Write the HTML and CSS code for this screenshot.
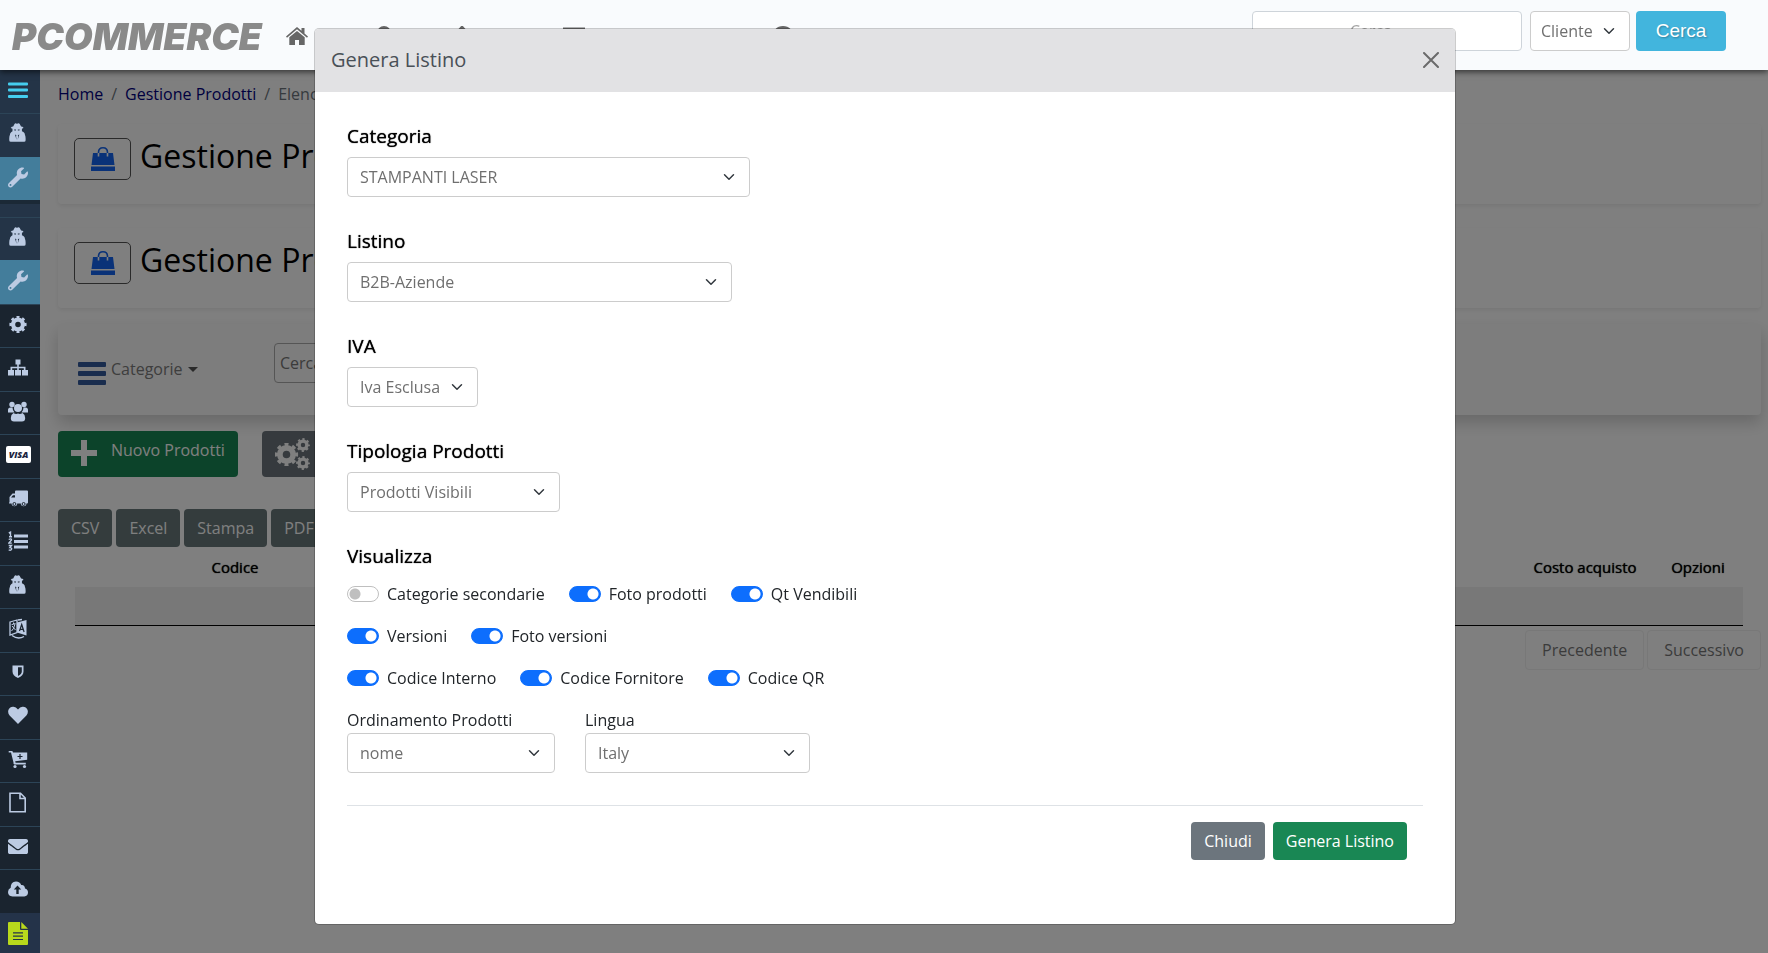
FILE: index.html
```
<!DOCTYPE html>
<html lang="it">
<head>
<meta charset="UTF-8">
<meta name="viewport" content="width=device-width, initial-scale=1.0">
<title>PCOMMERCE - Gestione Prodotti</title>
<link rel="stylesheet" href="styles.css">
</head>
<body>

<!-- Icone -->
<svg class="sprite" aria-hidden="true">
<symbol id="i-bars" viewBox="0 0 20 20"><path d="M1 2h18a1 1 0 0 1 1 1v1a1 1 0 0 1-1 1H1a1 1 0 0 1-1-1V3a1 1 0 0 1 1-1zM1 8h18a1 1 0 0 1 1 1v1a1 1 0 0 1-1 1H1a1 1 0 0 1-1-1V9a1 1 0 0 1 1-1zM1 14.500h18a1 1 0 0 1 1 1v1a1 1 0 0 1-1 1H1a1 1 0 0 1-1-1v-1a1 1 0 0 1 1-1z"/></symbol>
<symbol id="i-spy" viewBox="0 0 20 24"><path d="M4.500 4L6 1Q7-.1 8 .6q.9.400 1.600 0Q11-.2 12 1l1.500 3q2 .3 2.500 1 .7.600-.3 1l-1.200.5v2.800q2 .7 2.500 1.900 1 1.300.8 2 .9 1.700.9 4.300v2.200q0 1.800-1.800 1.800H1.800Q0 21.500 0 19.700v-2.200q0-2.600.9-4.300-.2-.7.8-2 .5-1.200 2-1.900V6.500L2.300 6q-1-.4-.2-1 .5-.7 2.400-1z"/><path class="cut" d="M5.500 7.500h2.200v1H5.900zM9.800 7.500H12l-.4 1H9.800zM6.500 13l1.700 1-.4 1.500.6 4zM11.500 13l-1.700 1 .4 1.500-.6 4z"/></symbol>
<symbol id="i-wrench" viewBox="0 0 512 512"><path d="M507.730 109.100c-2.240-9.030-13.540-12.090-20.120-5.510l-74.360 74.360-67.880-11.310-11.310-67.880 74.360-74.360c6.620-6.620 3.430-17.900-5.660-20.160-47.380-11.740-99.550.91-136.580 37.930-39.640 39.640-50.550 97.100-34.050 147.200L18.740 402.760c-24.990 24.990-24.990 65.510 0 90.500 24.990 24.990 65.510 24.990 90.500 0l213.210-213.210c50.120 16.710 107.470 5.680 147.370-34.220 37.070-37.070 49.700-89.320 37.910-136.730zM64 472c-13.250 0-24-10.750-24-24 0-13.260 10.750-24 24-24s24 10.740 24 24c0 13.250-10.750 24-24 24z"/></symbol>
<symbol id="i-cog" viewBox="0 0 20 20"><circle cx="10" cy="10" r="4.900" fill="none" stroke="currentColor" stroke-width="4.200"/><circle cx="10" cy="10" r="7.300" fill="none" stroke="currentColor" stroke-width="2.600" pathLength="80" stroke-dasharray="5 5" stroke-dashoffset="2.500"/></symbol>
<symbol id="i-sitemap" viewBox="0 0 20 20"><path d="M7.500 2h5v5h-1.700v2.200h6.700v3.300H20V18h-6v-5.500h1.800v-1.800h-5v1.800H13V18H7v-5.500h2.200v-1.800h-5v1.800H6V18H0v-5.500h2.500V9.200h6.700V7H7.500z"/></symbol>
<symbol id="i-users" viewBox="0 0 20 20"><circle cx="4" cy="3" r="2.700"/><circle cx="16" cy="3" r="2.700"/><path d="M0 11V8.500Q0 6 2.500 6h2Q4.500 9 6.500 11H1Q0 11 0 11zM20 11V8.500Q20 6 17.500 6h-2q0 3-2 5H19q1 0 1 0z"/><circle cx="10" cy="6.500" r="4"/><path d="M5.500 11.500Q8 13 10 12q2 1 4.500-.5 2.700 1.500 2.700 5Q17.200 20 14 20H6q-3.200 0-3.200-3.500 0-3.500 2.700-5z"/></symbol>
<symbol id="i-truck" viewBox="0 0 20 20"><path d="M8 2h11q1 0 1 1v11q0 1-1 1h-.6a2.800 2.800 0 0 1-5.600 0H9.200a2.800 2.800 0 0 1-5.600 0H1q0-1 .5-1.500V8.500L4.500 5H7V3q0-1 1-1zM5 6.700L3 9h4V6.700z" fill-rule="evenodd"/><circle cx="6.400" cy="15.500" r="1.500" class="ring"/><circle cx="15.600" cy="15.500" r="1.500" class="ring"/></symbol>
<symbol id="i-listol" viewBox="0 0 20 20"><path d="M6 3h14v3H6zM6 8.500h14v3H6zM6 14h14v3H6z"/><path d="M.8 1.500L2.500.7V5M1 5.300h3M.7 8q2.800-1.500 2.800.4L.8 11.600h3M.7 14h2.800l-1.600 2q2 0 1.700 1.600-.6 1.800-2.900.8" fill="none" stroke="currentColor" stroke-width="1.400"/></symbol>
<symbol id="i-lang" viewBox="0 0 20 20"><path d="M9 4l9.500-2.500V17L9 14z"/><path d="M2 3.500l7-2v12.500l-7 2.500z M4 17q6 4.500 12 1M10 1.500l4-.5" fill="none" stroke="currentColor" stroke-width="1.300"/><path d="M3.500 6.200l4-1.200M5.500 4v1.500M7 5.500q-1 5-3.500 7M4 7.500l3.500 4" fill="none" stroke="currentColor"/><path d="M11.500 12.500L13.700 6l2.400 7.500M12.200 10.700l3.200.5" fill="none" class="cutline"/></symbol>
<symbol id="i-shield" viewBox="0 0 20 20"><path d="M4.500 3h11v6q0 4-5.500 6.500Q4.500 13 4.500 9zM10 4.800v8.700q3.800-2 3.800-4.500V4.800z" fill-rule="evenodd"/></symbol>
<symbol id="i-heart" viewBox="0 0 20 20"><path d="M10 18.500L1.600 10Q-.6 7.400.5 4.300 2 1 5.500 1.300 8 1.500 10 4q2-2.500 4.500-2.700Q18 1 19.500 4.300q1.100 3.100-1.100 5.700z"/></symbol>
<symbol id="i-cart" viewBox="0 0 20 20"><path d="M.7 1.500h3.200q.7 0 .9.800L5 3h14.200v7.200l-12 1.500.4 1.500h10.200v1.700H6.500Q5 14.500 5.500 13L3 3H.7z"/><circle cx="7" cy="17" r="1.600"/><circle cx="16.500" cy="17" r="1.600"/><path d="M12 4.500v5M9.500 7h5" class="cutline"/></symbol>
<symbol id="i-file" viewBox="0 0 20 20"><path d="M2 .8h10.500L17.200 5.500V19.200H2zM12 1v5h5" fill="none" stroke="currentColor" stroke-width="1.600"/></symbol>
<symbol id="i-mail" viewBox="0 0 512 512"><path d="M502.300 190.800c3.900-3.100 9.700-.2 9.700 4.700V400c0 26.500-21.500 48-48 48H48c-26.500 0-48-21.500-48-48V195.600c0-5 5.700-7.800 9.700-4.700 22.400 17.400 52.100 39.500 154.100 113.600 21.100 15.400 56.700 47.800 92.200 47.600 35.700.3 72-32.800 92.300-47.600 102-74.100 131.600-96.300 154-113.700zM256 320c23.200.4 56.600-29.200 73.400-41.400 132.700-96.300 142.800-104.700 173.400-128.700 5.800-4.500 9.200-11.500 9.200-18.900v-19c0-26.500-21.500-48-48-48H48c-26.500 0-48 21.500-48 48v19c0 7.400 3.400 14.300 9.200 18.900 30.600 23.900 40.700 32.400 173.400 128.700 16.800 12.200 50.200 41.800 73.400 41.400z"/></symbol>
<symbol id="i-cloud" viewBox="0 0 20 20"><path d="M4.500 17Q0 16.500 0 12.500 0 9.500 2.700 8.300 2.500 2.500 8 2q4 0 5.200 3.500Q16.700 5 17 9q3 .8 3 4 0 3.600-3.700 4z"/><path class="cut" d="M9.500 6l3.700 4h-2.500v4.500H8.300V10H5.800z"/></symbol>
<symbol id="i-doc" viewBox="0 0 20 23"><path d="M1 0h11v7q0 1 1 1h7v14q0 1-1 1H1q-1 0-1-1V1q0-1 1-1zM13.300 0L20 6.700h-6.700z"/><path d="M5 10.800h10M5 14.200h10M5 17.500h10" class="cutline"/></symbol>
<symbol id="i-bag" viewBox="0 0 24 24"><path d="M2 6h20l1.500 12H.5zM0 19.500h24V24H0z"/><path d="M7.500 6V5.500Q7.500.8 12 .8t4.500 4.700V6" fill="none" stroke="currentColor" stroke-width="1.600"/><path d="M7.500 6v3.500M16.500 6v3.500" fill="none" stroke="#fff" stroke-width="1.600"/></symbol>
<symbol id="i-home" viewBox="0 0 22 18"><path d="M0 9.500L11 0l4.500 3.800V1h3v5.500L22 9.500l-1 1.200L11 2.300 1 10.700z"/><path d="M3.300 10.300L11 4l7.700 6.300V18H13v-5H9v5H3.300z"/></symbol>
</svg>

<header class="topbar">
<a href="#" class="logo">PCOMMERCE</a>
<nav class="topnav">
<a href="#" class="home"><svg><use href="#i-home"/></svg>Home</a>
<a href="#" class="user" aria-label="Utenti"><svg viewBox="0 0 22 22"><circle cx="11" cy="7" r="7"/></svg></a>
<a href="#" class="upload" aria-label="Carica"><svg viewBox="0 0 22 22"><path d="M11-1l7 8h-4v12H8V7H4z"/></svg></a>
<a href="#" class="edit" aria-label="Modifica"><svg viewBox="0 0 24 22"><path d="M1 2h22v17H1z" fill="none" stroke="currentColor" stroke-width="2.500"/></svg></a>
<a href="#" aria-label="Aiuto"><svg viewBox="0 0 22 22"><circle cx="11" cy="11" r="9" fill="none" stroke="currentColor" stroke-width="4"/></svg></a>
</nav>
<form class="topsearch">
<input type="text" placeholder="Cerca" aria-label="Cerca">
<select class="select" aria-label="Tipo ricerca"><option>Cliente</option></select>
<button type="button">Cerca</button>
</form>
</header>

<div class="container">
<!-- Menu laterale -->
<aside class="sidebar">
<ul>
<li><a href="#" class="menu" aria-label="Menu"><svg><use href="#i-bars"/></svg></a></li>
<li><a href="#" aria-label="Agenti"><svg><use href="#i-spy"/></svg></a></li>
<li><a href="#" class="active" aria-label="Strumenti"><svg><use href="#i-wrench"/></svg></a></li>
</ul>
<ul class="main-list">
<li><a href="#" class="light" aria-label="Agenti"><svg><use href="#i-spy"/></svg></a></li>
<li><a href="#" class="active" aria-label="Strumenti"><svg><use href="#i-wrench"/></svg></a></li>
<li><a href="#" aria-label="Impostazioni"><svg><use href="#i-cog"/></svg></a></li>
<li><a href="#" aria-label="Categorie"><svg><use href="#i-sitemap"/></svg></a></li>
<li><a href="#" aria-label="Clienti"><svg><use href="#i-users"/></svg></a></li>
<li><a href="#" aria-label="Pagamenti"><span class="visa">VISA</span></a></li>
<li><a href="#" aria-label="Spedizioni"><svg><use href="#i-truck"/></svg></a></li>
<li><a href="#" aria-label="Elenco"><svg><use href="#i-listol"/></svg></a></li>
<li><a href="#" aria-label="Agenti"><svg><use href="#i-spy"/></svg></a></li>
<li><a href="#" aria-label="Lingue"><svg><use href="#i-lang"/></svg></a></li>
<li><a href="#" aria-label="Sicurezza"><svg><use href="#i-shield"/></svg></a></li>
<li><a href="#" aria-label="Preferiti"><svg><use href="#i-heart"/></svg></a></li>
<li><a href="#" aria-label="Carrello"><svg><use href="#i-cart"/></svg></a></li>
<li><a href="#" aria-label="Pagine"><svg><use href="#i-file"/></svg></a></li>
<li><a href="#" aria-label="Email"><svg><use href="#i-mail"/></svg></a></li>
<li><a href="#" aria-label="Backup"><svg><use href="#i-cloud"/></svg></a></li>
<li><a href="#" class="doc" aria-label="Documenti"><svg><use href="#i-doc"/></svg></a></li>
</ul>
</aside>

<!-- Contenuto -->
<main>
<nav class="breadcrumb">
<a href="#">Home</a><span>/</span><a href="#">Gestione Prodotti</a><span>/</span><span>Elenco</span>
</nav>

<section class="card">
<button type="button" class="bag" aria-label="Prodotti"><svg><use href="#i-bag"/></svg></button>
<h1>Gestione Prodotti</h1>
</section>
<section class="card">
<button type="button" class="bag" aria-label="Prodotti"><svg><use href="#i-bag"/></svg></button>
<h1>Gestione Prodotti</h1>
</section>

<section class="filter">
<button type="button" class="categories"><svg viewBox="0 0 28 24"><path d="M1 0h26q1 0 1 1v3q0 1-1 1H1Q0 5 0 4V1q0-1 1-1zM1 9h26q1 0 1 1v3q0 1-1 1H1q-1 0-1-1v-3q0-1 1-1zM1 18h26q1 0 1 1v3q0 1-1 1H1q-1 0-1-1v-3q0-1 1-1z"/></svg>Categorie<i class="caret"></i></button>
<input type="text" placeholder="Cerca" aria-label="Cerca prodotto">
</section>

<div class="actions">
<button type="button" class="btn green"><svg viewBox="0 0 26 26"><path d="M10 0h6v10h10v6H16v10h-6V16H0v-6h10z"/></svg>Nuovo Prodotti</button>
<button type="button" class="btn gray" aria-label="Opzioni"><svg class="gears" viewBox="0 0 36 32"><use href="#i-cog" x="-2" y="3" width="27" height="27"/><use href="#i-cog" x="20" y="-1" width="16" height="16"/><use href="#i-cog" x="20" y="17" width="16" height="16"/></svg></button>
</div>

<div class="exports">
<button type="button">CSV</button>
<button type="button">Excel</button>
<button type="button">Stampa</button>
<button type="button">PDF</button>
</div>

<table>
<thead><tr><th class="code">Codice</th><th></th><th class="cost">Costo acquisto</th><th class="opt">Opzioni</th></tr></thead>
<tbody><tr><td colspan="4"></td></tr></tbody>
</table>

<div class="pages">
<button type="button">Precedente</button>
<button type="button">Successivo</button>
</div>
</main>
</div>

<div class="backdrop"></div>

<!-- Finestra Genera Listino -->
<div class="modal" role="dialog" aria-labelledby="modalTitle">
<div class="modal-header">
<h2 id="modalTitle">Genera Listino</h2>
<button type="button" aria-label="Chiudi finestra"><svg viewBox="0 0 16 16"><path d="M1 1l14 14M15 1L1 15"/></svg></button>
</div>
<form class="modal-body">
<div class="field">
<label for="categoria">Categoria</label>
<select id="categoria" class="select w-categoria"><option>STAMPANTI LASER</option></select>
</div>
<div class="field">
<label for="listino">Listino</label>
<select id="listino" class="select w-listino"><option>B2B-Aziende</option></select>
</div>
<div class="field">
<label for="iva">IVA</label>
<select id="iva" class="select w-iva"><option>Iva Esclusa</option></select>
</div>
<div class="field">
<label for="tipologia">Tipologia Prodotti</label>
<select id="tipologia" class="select w-tipologia"><option>Prodotti Visibili</option></select>
</div>

<h3>Visualizza</h3>
<div class="switches">
<label><input type="checkbox">Categorie secondarie</label>
<label><input type="checkbox" checked>Foto prodotti</label>
<label><input type="checkbox" checked>Qt Vendibili</label>
</div>
<div class="switches">
<label><input type="checkbox" checked>Versioni</label>
<label><input type="checkbox" checked>Foto versioni</label>
</div>
<div class="switches">
<label><input type="checkbox" checked>Codice Interno</label>
<label><input type="checkbox" checked>Codice Fornitore</label>
<label><input type="checkbox" checked>Codice QR</label>
</div>

<div class="sorting">
<div>
<label for="ordinamento">Ordinamento Prodotti</label>
<select id="ordinamento" class="select w-ordinamento"><option>nome</option></select>
</div>
<div>
<label for="lingua">Lingua</label>
<select id="lingua" class="select w-lingua"><option>Italy</option></select>
</div>
</div>

<div class="modal-footer">
<button type="button" class="btn gray">Chiudi</button>
<button type="button" class="btn green">Genera Listino</button>
</div>
</form>
</div>

</body>
</html>
```
FILE: styles.css
```
/* Stili generali */
* {
  box-sizing: border-box;
}
body {
  margin: 0;
  height: 100vh;
  overflow: hidden;
  font-family: "Open Sans", sans-serif;
  font-size: 16px;
  line-height: 24px;
  color: #212529;
  background: #fff;
}
h1, h2, h3, ul {
  margin: 0;
  padding: 0;
}
a {
  text-decoration: none;
}
button, input, select {
  font: inherit;
}
svg {
  fill: currentColor;
  flex-shrink: 0;
}
.sprite {
  position: absolute;
  width: 0;
  height: 0;
}

/* Barra superiore */
.topbar {
  position: relative;
  z-index: 20;
  display: flex;
  align-items: flex-start;
  height: 70px;
  padding: 11px 42px 0 12px;
  background: #f9fbfd;
  box-shadow: 0 2px 6px rgba(0,0,0,0.6);
}
.logo {
  width: 274px;
  padding-top: 6px;
  font-family: Inter, sans-serif;
  font-size: 37px;
  font-weight: 900;
  font-style: italic;
  line-height: 40px;
  color: #8a8a8a;
}
.topnav {
  display: flex;
  flex: 1;
  padding-top: 15px;
}
.topnav a {
  display: flex;
  gap: 6px;
  color: #666;
}
.topnav svg {
  width: 22px;
  height: 22px;
}
.topnav .home {
  width: 87px;
}
.topnav .home svg {
  height: 18px;
  margin-top: 1px;
}
.topnav .user {
  width: 78px;
}
.topnav .upload {
  width: 112px;
}
.topnav .edit {
  width: 209px;
}
.topsearch {
  display: flex;
}
.topsearch input {
  width: 270px;
  height: 40px;
  padding: 0 44px 0 12px;
  border: 1px solid #ced4da;
  border-radius: 4px;
  text-align: center;
}
.topsearch input::placeholder {
  color: #a5a5a5;
}
.topsearch .select {
  width: 100px;
  margin: 0 6px 0 8px;
  padding-left: 10px;
}
.topsearch button {
  width: 90px;
  height: 40px;
  border: 0;
  border-radius: 4px;
  background: #42b5dd;
  color: #fff;
  font-family: "Liberation Sans", sans-serif;
  font-size: 19px;
  text-shadow: 1px 1px 2px rgba(0,0,0,0.3);
}

.select {
  appearance: none;
  height: 40px;
  padding: 0 36px 0 12px;
  border: 1px solid #ccc;
  border-radius: 4px;
  background: #fff url("data:image/svg+xml,%3Csvg xmlns='http://www.w3.org/2000/svg' viewBox='0 0 16 16'%3E%3Cpath fill='none' stroke='%23343a40' stroke-linecap='round' stroke-linejoin='round' stroke-width='2' d='M2 5l6 6 6-6'/%3E%3C/svg%3E") no-repeat right 12px center / 16px 12px;
  color: #6f6f6f;
}

/* Menu laterale */
.container {
  display: flex;
  height: calc(100vh - 70px);
}
.sidebar {
  position: relative;
  z-index: 15;
  width: 40px;
  flex-shrink: 0;
  overflow: hidden;
  background: #243447;
}
.sidebar ul {
  list-style: none;
}
.sidebar .main-list {
  margin-top: 13px;
}
.sidebar li {
  height: 43px;
  --bg: #1a242f;
}
.sidebar li:nth-child(even) {
  height: 44px;
}
.sidebar ul:first-child li,
.sidebar li:has(.light) {
  --bg: #243447;
}
.sidebar a {
  display: flex;
  align-items: center;
  height: 100%;
  padding: 0 0 4px 8px;
  border-top: 1px solid #2c4457;
  background: var(--bg);
  color: #bccbe3;
}
.sidebar ul:first-child {
  border-bottom: 4px solid #1b2936;
}
.sidebar .menu {
  color: #45cdee;
  border-top-color: #243447;
}
.sidebar a.active {
  background: #437d9b;
  border-color: #437d9b;
}
.sidebar a.doc {
  background: #243349;
  border-color: #243349;
  color: #b8d91c;
  --bg: #243349;
}
.sidebar svg {
  width: 20px;
  height: 21px;
}
.sidebar .doc svg {
  height: 23px;
}
.cut {
  fill: var(--bg);
}
.cutline {
  fill: none;
  stroke: var(--bg);
  stroke-width: 1.2px;
}
.ring {
  fill: #bccbe3;
  stroke: var(--bg);
}
.visa {
  width: 25px;
  margin-left: -2px;
  border-radius: 2px;
  background: #fff;
  color: #1b2440;
  font-size: 9px;
  font-weight: 800;
  font-style: italic;
  line-height: 17px;
  text-align: center;
}

/* Contenuto */
main {
  flex: 1;
  min-width: 0;
  padding: 12px 7px 0 18px;
}
.breadcrumb {
  display: flex;
  gap: 8px;
  margin-bottom: 18px;
  color: #6c757d;
}
.breadcrumb a {
  color: #000080;
}
.card {
  display: flex;
  gap: 9px;
  height: 80px;
  margin-bottom: 24px;
  padding: 14px 16px;
  border-radius: 4px;
  box-shadow: 0 2px 4px rgba(0,0,0,0.08);
}
.bag {
  width: 57px;
  height: 42px;
  padding: 5px 0 0;
  border: 1px solid #555;
  border-radius: 5px;
  background: transparent;
  color: #1565f0;
}
.bag svg {
  width: 24px;
  height: 24px;
}
.card h1 {
  font-size: 32px;
  font-weight: 400;
  line-height: 36px;
  color: #000;
}
.filter {
  display: flex;
  align-items: flex-start;
  height: 91px;
  margin: -8px 0 16px;
  padding: 19px 20px;
  border-radius: 4px;
  background: #fafafa;
  box-shadow: 0 8px 16px rgba(0,0,0,0.18);
}
.categories {
  display: flex;
  align-items: flex-start;
  width: 196px;
  padding: 14px 0 0;
  border: 0;
  background: none;
  color: #7c7c7c;
}
.categories svg {
  width: 28px;
  height: 24px;
  margin: 5px 5px 0 0;
  color: #345b9c;
}
.caret {
  margin: 10px 0 0 5px;
  border: 5px solid transparent;
  border-top-color: #555;
  border-bottom: 0;
}
.filter input {
  width: 240px;
  height: 40px;
  padding: 0 5px;
  border: 1px solid #aaa;
  border-radius: 4px;
  background: transparent;
}
.filter input::placeholder {
  color: #777;
}

.btn {
  height: 38px;
  padding: 0 13px;
  border: 0;
  border-radius: 4px;
  color: #fff;
}
.green {
  background: #198754;
}
.gray {
  background: #6c757d;
}
.actions {
  display: flex;
  gap: 24px;
  margin-bottom: 32px;
}
.actions .btn {
  display: flex;
  gap: 14px;
  height: 46px;
  padding-top: 7px;
}
.actions svg {
  width: 26px;
  height: 26px;
  margin-top: 2px;
}
.actions svg.gears {
  width: 36px;
  height: 32px;
  margin-top: 0;
}
.exports {
  display: flex;
  gap: 4px;
}
.exports button {
  height: 38px;
  padding: 0 13px;
  border: 0;
  border-radius: 4px;
  background: #68787a;
  color: #fff;
}

/* Tabella */
table {
  width: calc(100% - 35px);
  margin: 0 18px 4px 17px;
  border-collapse: collapse;
  table-layout: fixed;
}
th {
  height: 40px;
  padding: 0;
  font-size: 15px;
  font-weight: 400;
  color: #000;
  text-shadow: 0 0 1px #000;
}
.code {
  width: 320px;
}
.cost {
  width: 136px;
}
.opt {
  width: 90px;
}
td {
  height: 38px;
  background: #f0f0f0;
  border-bottom: 1px solid #000;
}
.pages {
  display: flex;
  justify-content: flex-end;
  gap: 3px;
}
.pages button {
  height: 40px;
  padding: 0 16px;
  border: 1px solid #f0f0f0;
  border-radius: 4px;
  background: none;
  color: #777;
}

/* Finestra modale */
.backdrop {
  position: fixed;
  inset: 0;
  z-index: 10;
  background: rgba(0,0,0,0.5);
}
.modal {
  position: fixed;
  top: 28px;
  left: 2px;
  right: 0;
  z-index: 30;
  max-width: 1142px;
  margin: 0 auto;
  overflow: hidden;
  border: 1px solid rgba(0,0,0,0.2);
  border-radius: 5px;
  background: #fff;
  background-clip: padding-box;
}
.modal-header {
  display: flex;
  justify-content: space-between;
  align-items: center;
  height: 63px;
  padding: 0 16px 2px;
  background: #e2e2e4;
}
.modal-header h2 {
  font-size: 20px;
  font-weight: 400;
  color: #495057;
}
.modal-header button {
  padding: 0;
  border: 0;
  background: none;
  line-height: 0;
}
.modal-header svg {
  width: 16px;
  height: 16px;
  stroke: #6b6b6b;
  stroke-width: 2px;
  stroke-linecap: round;
}
.modal-body {
  padding: 32px 32px 64px;
}
.field {
  margin-bottom: 32px;
}
.field label,
.modal-body h3 {
  display: block;
  margin-bottom: 8px;
  font-size: 19px;
  font-weight: 400;
  line-height: 25px;
  color: #000;
  text-shadow: 0 0 1px #000;
}
.modal-body h3 {
  margin-bottom: 4px;
}
.field select {
  display: block;
}
.w-categoria {
  width: 403px;
}
.w-listino {
  width: 385px;
}
.w-iva {
  width: 131px;
}
.w-tipologia {
  width: 213px;
}
.w-ordinamento {
  width: 208px;
}
.w-lingua {
  width: 225px;
}
.switches {
  display: flex;
  gap: 24px;
  height: 42px;
}
.switches label {
  display: flex;
  align-items: center;
  gap: 8px;
}
.switches input {
  appearance: none;
  width: 32px;
  height: 16px;
  margin: 0;
  border: 1px solid #bfbfbf;
  border-radius: 8px;
  background: radial-gradient(circle at 7px 7px, #bfbfbf 5px, transparent 6px);
}
.switches input:checked {
  border-color: #0d6efd;
  background: radial-gradient(circle at 23px 7px, #fff 5px, #0d6efd 6px);
}
.sorting {
  display: flex;
  gap: 30px;
  padding: 8px 0 32px;
  border-bottom: 1px solid #dee2e6;
}
.sorting label {
  display: block;
  line-height: 26px;
}
.sorting select {
  display: block;
}
.modal-footer {
  display: flex;
  justify-content: flex-end;
  gap: 8px;
  padding: 16px 16px 0;
}
```
